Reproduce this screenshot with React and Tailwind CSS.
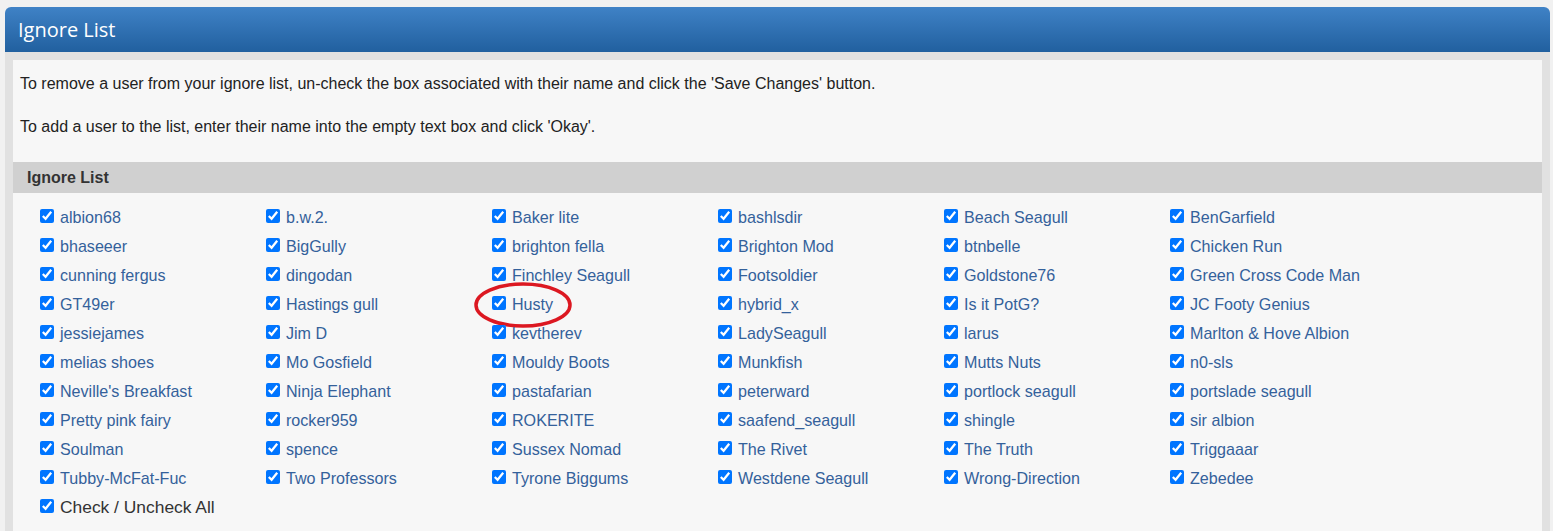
import React from 'react'

const names = [
  'albion68', 'b.w.2.', 'Baker lite', 'bashlsdir', 'Beach Seagull', 'BenGarfield',
  'bhaseeer', 'BigGully', 'brighton fella', 'Brighton Mod', 'btnbelle', 'Chicken Run',
  'cunning fergus', 'dingodan', 'Finchley Seagull', 'Footsoldier', 'Goldstone76', 'Green Cross Code Man',
  'GT49er', 'Hastings gull', 'Husty', 'hybrid_x', 'Is it PotG?', 'JC Footy Genius',
  'jessiejames', 'Jim D', 'kevtherev', 'LadySeagull', 'larus', 'Marlton & Hove Albion',
  'melias shoes', 'Mo Gosfield', 'Mouldy Boots', 'Munkfish', 'Mutts Nuts', 'n0-sls',
  "Neville's Breakfast", 'Ninja Elephant', 'pastafarian', 'peterward', 'portlock seagull', 'portslade seagull',
  'Pretty pink fairy', 'rocker959', 'ROKERITE', 'saafend_seagull', 'shingle', 'sir albion',
  'Soulman', 'spence', 'Sussex Nomad', 'The Rivet', 'The Truth', 'Triggaaar',
  'Tubby-McFat-Fuc', 'Two Professors', 'Tyrone Biggums', 'Westdene Seagull', 'Wrong-Direction', 'Zebedee',
]

// one entry of the ignore list
function IgnoreItem({ name }) {
  return (
    <label className="relative flex items-center h-[29px] cursor-pointer">
      <input type="checkbox" defaultChecked className="w-[14px] h-[14px] mr-[6px] -mt-[3px] accent-[#0075ff]" />
      <span className="text-[16.1px] text-[#34619b]">{name}</span>
      {name === 'Husty' && (
        <svg className="absolute left-[-19px] top-[-9px] pointer-events-none" width="102" height="48" viewBox="0 0 102 48" aria-hidden="true">
          <ellipse cx="50" cy="24" rx="47" ry="21" fill="none" stroke="#dc1821" strokeWidth="3.5" />
        </svg>
      )}
    </label>
  )
}

export default function App() {
  return (
    <div className="min-h-screen bg-[#f1f1f1] pt-[7px] pl-[5px] pr-[3px] font-['Liberation_Sans',Arial,sans-serif]">
      {/* Panel header */}
      <div className="h-[45px] rounded-t-[6px] bg-gradient-to-b from-[#3f82c6] to-[#21609f] flex items-center pl-[13px]">
        <h2 className="text-white text-[20px] font-['Open_Sans',sans-serif] font-normal">Ignore List</h2>
      </div>
      {/* Panel body */}
      <div className="bg-[#e1e1e1] px-[8px] pt-[8px] min-h-[480px]">
        <div className="bg-[#f7f7f7] min-h-[480px]">
          <div className="px-[7px] pt-[14px] pb-[25px] text-[16px] text-[#222] leading-[20px]">
            <p>To remove a user from your ignore list, un-check the box associated with their name and click the 'Save Changes' button.</p>
            <p className="mt-[23px]">To add a user to the list, enter their name into the empty text box and click 'Okay'.</p>
          </div>
          <div className="h-[31px] bg-[#d0d0d0] flex items-center pl-[14px]">
            <span className="text-[16px] font-bold text-[#333]">Ignore List</span>
          </div>
          <div className="pl-[27px] pt-[10px]">
            <div className="grid grid-cols-[repeat(6,226px)]">
              {names.map(n => (
                <IgnoreItem key={n} name={n} />
              ))}
            </div>
            <label className="flex items-center h-[29px]">
              <input type="checkbox" defaultChecked className="w-[14px] h-[14px] mr-[6px] -mt-[3px] accent-[#0075ff]" />
              <span className="text-[17.4px] text-[#333]">Check / Uncheck All</span>
            </label>
          </div>
        </div>
      </div>
    </div>
  )
}
